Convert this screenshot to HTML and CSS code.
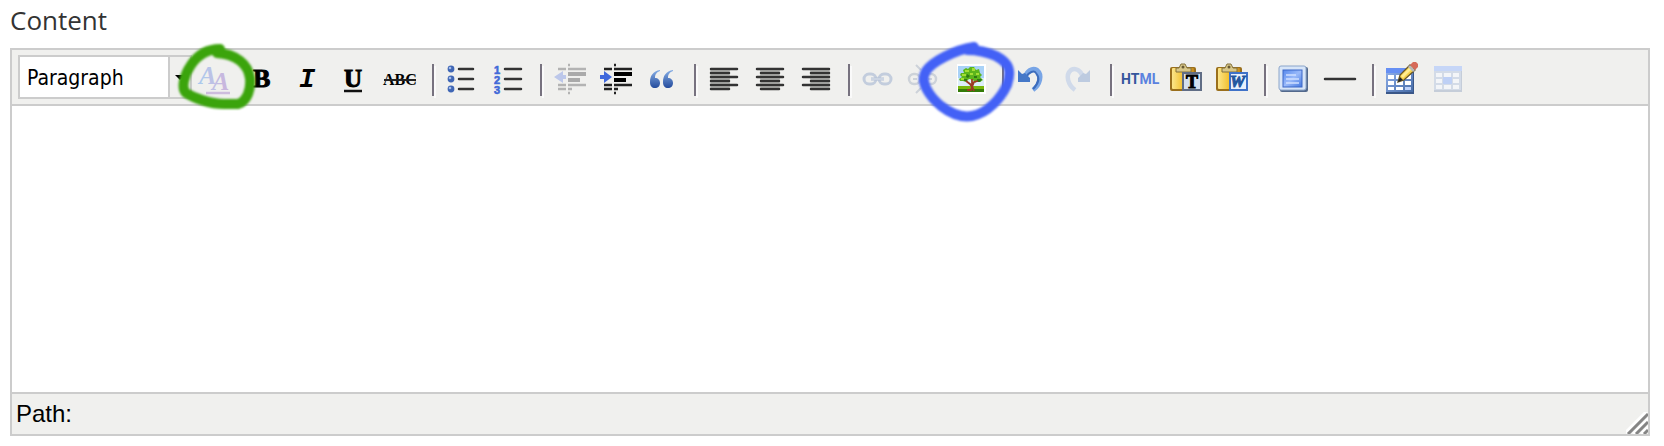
FILE: index.html
```html
<!DOCTYPE html>
<html lang="en">
<head>
    <meta charset="UTF-8">
    <meta name="viewport" content="width=device-width, initial-scale=1.0">
    <title>Content</title>
    <link rel="stylesheet" href="styles.css">
</head>
<body>
    <div class="field">
        <label class="field-label" for="content">Content</label>

        <div class="editor">
            <div class="toolbar" role="toolbar">
                <div class="format">
                    <select class="format-select" aria-label="Format">
                        <option>Paragraph</option>
                    </select>
                    <span class="format-arrow"></span>
                </div>

                <button type="button" class="tool" aria-label="Edit CSS style">
                    <svg viewBox="0 0 46 54">
                        <defs><linearGradient id="letters" x1="7" y1="0" x2="38" y2="0" gradientUnits="userSpaceOnUse"><stop offset="0" stop-color="#a9cbee"/><stop offset=".5" stop-color="#c0bfe4"/><stop offset="1" stop-color="#cdb2da"/></linearGradient></defs>
                        <text x="7" y="34" class="serif italic letters" font-size="26">A<tspan x="20" y="40">A</tspan></text>
                        <path d="M14 43H38" stroke="#cdbcdd" stroke-width="2.5"/>
                    </svg>
                </button>
                <button type="button" class="tool" aria-label="Bold">
                    <svg viewBox="0 0 46 54"><text x="15" y="37" class="serif heavy" font-size="26">B</text></svg>
                </button>
                <button type="button" class="tool" aria-label="Italic">
                    <svg viewBox="0 0 46 54"><text x="15" y="37" class="mono italic" font-size="27">I</text></svg>
                </button>
                <button type="button" class="tool" aria-label="Underline">
                    <svg viewBox="0 0 46 54">
                        <text x="14" y="37" class="serif heavy" font-size="25">U</text>
                        <path d="M14 41H32" stroke="#111" stroke-width="2.5"/>
                    </svg>
                </button>
                <button type="button" class="tool" aria-label="Strikethrough">
                    <svg viewBox="0 0 46 54">
                        <text x="7" y="35" class="serif" font-size="16">ABC</text>
                        <path d="M8 30H40" stroke="#222" stroke-width="2"/>
                    </svg>
                </button>
                <span class="separator"></span>

                <button type="button" class="tool" aria-label="Bulleted list">
                    <svg viewBox="0 0 46 54">
                        <g fill="#3f66b5"><circle cx="13" cy="19" r="3.4"/><circle cx="13" cy="29" r="3.4"/><circle cx="13" cy="39" r="3.4"/></g>
                        <g fill="#a5bdea"><circle cx="12" cy="18" r="1.3"/><circle cx="12" cy="28" r="1.3"/><circle cx="12" cy="38" r="1.3"/></g>
                        <path d="M21 19H35M21 29H35M21 39H35" class="line"/>
                    </svg>
                </button>
                <button type="button" class="tool" aria-label="Numbered list">
                    <svg viewBox="0 0 46 54">
                        <g class="numbers"><text x="10" y="24">1</text><text x="10" y="34">2</text><text x="10" y="44">3</text></g>
                        <path d="M21 19H37M21 29H37M21 39H37" class="line"/>
                    </svg>
                </button>
                <span class="separator"></span>

                <button type="button" class="tool" aria-label="Outdent" disabled>
                    <svg viewBox="0 0 46 54">
                        <path d="M12 19H20M22 19H40M12 35H20M22 35H40M12 39H20M22 39H26M22 15H24M22 43H24" stroke="#b3b3b3" stroke-width="2.4"/>
                        <path d="M22 24H40M22 30H34" stroke="#aaa" stroke-width="4"/>
                        <path d="M8 27L17 21V25H20V29H17V33Z" fill="#bcc7ea"/>
                    </svg>
                </button>
                <button type="button" class="tool" aria-label="Indent">
                    <svg viewBox="0 0 46 54">
                        <path d="M12 19H20M22 19H40M12 35H20M22 35H40M12 39H20M22 39H26M22 15H24M22 43H24" stroke="#222" stroke-width="2.4"/>
                        <path d="M22 24H40M22 30H34" stroke="#000" stroke-width="4"/>
                        <path d="M20 27L12 21V25H8V29H12V33Z" fill="#3f68dc"/>
                    </svg>
                </button>
                <button type="button" class="tool" aria-label="Blockquote">
                    <svg viewBox="0 0 46 54">
                        <defs><linearGradient id="quote" x1="0" y1="0" x2="0" y2="1"><stop offset="0" stop-color="#86aee6"/><stop offset="1" stop-color="#244b9c"/></linearGradient></defs>
                        <path d="M22 20C15 21 12 26 12 32C12 36 14 38 17 38C20 38 22 36 22 33C22 30 20 28 17 28C17 24 19 22 22 21Z" fill="url(#quote)"/>
                        <path d="M35 20C28 21 25 26 25 32C25 36 27 38 30 38C33 38 35 36 35 33C35 30 33 28 30 28C30 24 32 22 35 21Z" fill="url(#quote)"/>
                    </svg>
                </button>
                <span class="separator"></span>

                <button type="button" class="tool" aria-label="Align left">
                    <svg viewBox="0 0 46 54">
                        <path d="M10 19H30V39H10Z" fill="#c3c4c2"/>
                        <path d="M11 19H37M11 23H29M11 27H37M11 31H29M11 35H37M11 39H29" class="line"/>
                    </svg>
                </button>
                <button type="button" class="tool" aria-label="Align center">
                    <svg viewBox="0 0 46 54">
                        <path d="M14 19H34V39H14Z" fill="#c3c4c2"/>
                        <path d="M11 19H37M15 23H33M11 27H37M15 31H33M11 35H37M15 39H33" class="line"/>
                    </svg>
                </button>
                <button type="button" class="tool" aria-label="Align right">
                    <svg viewBox="0 0 46 54">
                        <path d="M18 19H38V39H18Z" fill="#c3c4c2"/>
                        <path d="M11 19H37M19 23H37M11 27H37M19 31H37M11 35H37M19 39H37" class="line"/>
                    </svg>
                </button>
                <span class="separator"></span>

                <button type="button" class="tool" aria-label="Insert link" disabled>
                    <svg viewBox="0 0 46 54" fill="none" stroke="#c3cddd" stroke-width="3">
                        <rect x="10" y="24" width="12" height="10" rx="5"/><rect x="25" y="24" width="12" height="10" rx="5"/>
                        <path d="M17 29H30" stroke="#b4c1d6"/><path d="M17 29H30" stroke="#e3e8ef" stroke-width="1"/>
                    </svg>
                </button>
                <button type="button" class="tool" aria-label="Unlink" disabled>
                    <svg viewBox="0 0 46 54" fill="none" stroke="#cdd2d9" stroke-width="2.5">
                        <rect x="9" y="24" width="11" height="10" rx="5"/><rect x="25" y="24" width="11" height="10" rx="5"/>
                        <path d="M13 29H17M28 29H32M16 15L21 20M29 15L24 20M16 43L21 38M29 43L24 38" stroke-width="2"/>
                    </svg>
                </button>
                <button type="button" class="tool" aria-label="Insert image">
                    <svg viewBox="0 0 46 54">
                        <path d="M11 14H40V44H11Z" fill="#fff"/>
                        <path d="M12 16H38V37H12Z" fill="#a9d2f7"/>
                        <path d="M12 28H38V37H12Z" fill="#dceefa"/>
                        <path d="M12 36H38V39H12Z" fill="#79b80e"/><path d="M12 39H38V42H12Z" fill="#347b08"/>
                        <path d="M17 20L20 18L22 19L24 17H28L30 20L33 19L34 23L36 25L34 27L37 30L34 32L31 31L29 33L27 30L23 29L20 32L17 31H14L13 29L16 27L14 25L15 23L18 23Z" fill="#5cb51c"/>
                        <path d="M19 20H23V22H19ZM26 18H29V21H26ZM16 24H20V26H16ZM24 23H27V25H24ZM30 23H33V25H30ZM15 28H18V30H15Z" fill="#a3df35"/>
                        <path d="M21 24L24 26L22 28L20 27ZM28 26H31V28H28ZM31 29H36L34 32H31ZM18 29H21V31H18Z" fill="#2e7a14"/>
                        <path d="M20 31L24 34L26 37L25 40H22V41M26 37L28 32L32 31M26 36V29M26 36L28 41" fill="none" stroke="#9c3a22" stroke-width="1.8"/>
                    </svg>
                </button>
                <span class="separator"></span>

                <button type="button" class="tool" aria-label="Undo">
                    <svg viewBox="0 0 46 54">
                        <path d="M17 27C19 21 24 17 29 20C35 25 32 35 25 40" fill="none" stroke="#78a5e6" stroke-width="4.5"/>
                        <path d="M18 27C21 22 26 20 28 23C32 28 30 34 25 39" fill="none" stroke="#3d6dbd" stroke-width="2"/>
                        <path d="M10 20L14 24L17 23L22 28V32H10Z" fill="#4578c8"/>
                    </svg>
                </button>
                <button type="button" class="tool" aria-label="Redo" disabled>
                    <svg viewBox="0 0 46 54">
                        <path d="M29 27C27 21 22 17 17 20C11 25 14 35 21 40" fill="none" stroke="#d0daea" stroke-width="4.5"/>
                        <path d="M36 20L32 24L29 23L24 28V32H36Z" fill="#bdcbe0"/>
                    </svg>
                </button>
                <span class="separator"></span>

                <button type="button" class="tool" aria-label="Edit HTML source">
                    <svg viewBox="0 0 46 54"><text x="5" y="34" class="source">HT<tspan fill="#5b82df">ML</tspan></text></svg>
                </button>
                <button type="button" class="tool" aria-label="Paste as plain text">
                    <svg viewBox="0 0 46 54">
                        <defs>
                            <linearGradient id="board"><stop offset="0" stop-color="#fbe58a"/><stop offset=".5" stop-color="#f3c02f"/><stop offset="1" stop-color="#c58a1c"/></linearGradient>
                        </defs>
                        <rect x="8" y="17" width="26" height="24" rx="2" fill="#9a6f1c"/>
                        <rect x="10" y="18" width="22" height="21" rx="1" fill="url(#board)"/>
                        <path d="M14 22V18H17L19 14H23L25 18H29V22Z" fill="#d8c789" stroke="#83713b"/>
                        <circle cx="21" cy="17" r="1.5" fill="#685a34"/>
                        <path d="M20 22H40V41H20Z" fill="#606d85"/><path d="M22 24H38V39H22Z" fill="#d4dfef"/>
                        <text x="24" y="38" class="serif heavy" font-size="18">T</text>
                    </svg>
                </button>
                <button type="button" class="tool" aria-label="Paste from Word">
                    <svg viewBox="0 0 46 54">
                        <rect x="8" y="17" width="26" height="24" rx="2" fill="#9a6f1c"/>
                        <rect x="10" y="18" width="22" height="21" rx="1" fill="url(#board)"/>
                        <path d="M14 22V18H17L19 14H23L25 18H29V22Z" fill="#d8c789" stroke="#83713b"/>
                        <circle cx="21" cy="17" r="1.5" fill="#685a34"/>
                        <path d="M21 22H40V41H21Z" fill="#3f72c8"/><path d="M23 24H38V39H23Z" fill="#e8f0fc"/>
                        <text x="22" y="37" class="serif italic" font-size="17" fill="#24579f" stroke="#24579f">W</text>
                    </svg>
                </button>
                <span class="separator"></span>

                <button type="button" class="tool" aria-label="Toggle fullscreen">
                    <svg viewBox="0 0 46 54">
                        <defs><linearGradient id="screen" x1="0" y1="0" x2="1" y2="1"><stop offset="0" stop-color="#5688ec"/><stop offset=".5" stop-color="#9abafa"/><stop offset="1" stop-color="#4477df"/></linearGradient></defs>
                        <rect x="10" y="17" width="28" height="25" rx="2" fill="#53698c"/>
                        <rect x="9" y="16" width="27" height="24" rx="2" fill="#d7e5f8" stroke="#8ca6ca"/>
                        <rect x="13" y="20" width="19" height="17" fill="url(#screen)" stroke="#3d68c7"/>
                        <path d="M16 25H26M16 29H29M16 33H29" stroke="#d0e0ff" stroke-width="1.5"/>
                    </svg>
                </button>
                <button type="button" class="tool" aria-label="Horizontal rule">
                    <svg viewBox="0 0 46 54"><path d="M9 29H39" class="line"/></svg>
                </button>
                <span class="separator"></span>

                <button type="button" class="tool" aria-label="Insert table">
                    <svg viewBox="0 0 46 54">
                        <defs><linearGradient id="grid" x1="0" y1="0" x2="1" y2="1"><stop offset="0" stop-color="#95b4ef"/><stop offset="1" stop-color="#456ba6"/></linearGradient></defs>
                        <path d="M8 18H36V44H8Z" fill="#3a5788"/><path d="M8 18H35V42H8Z" fill="url(#grid)"/>
                        <path d="M8 18H35V23H8Z" fill="#668ff3"/>
                        <path d="M10 25H16V29H10ZM18 25H25V29H18ZM27 25H33V29H27ZM10 31H16V35H10ZM18 31H25V35H18ZM27 31H33V35H27ZM10 37H16V40H10ZM18 37H25V40H18Z" fill="#fff"/>
                        <path d="M27 37H33V40H27Z" fill="#bed2fb"/>
                        <path d="M20 32L22 25L32 15L37 20L26 30Z" fill="#f4d14b" stroke="#665528" stroke-width="1.3"/>
                        <path d="M23 26L33 16L35 18L25 28Z" fill="#ffed91"/>
                        <path d="M30 17L32 15L37 20L35 22Z" fill="#b9b9b7"/>
                        <path d="M32 15L35 12H38L40 14V17L37 20Z" fill="#d66a59"/>
                        <path d="M20 32L22 27L25 30Z" fill="#222"/>
                    </svg>
                </button>
                <button type="button" class="tool" aria-label="Table cell properties" disabled>
                    <svg viewBox="0 0 46 54">
                        <path d="M10 16H38V42H10Z" fill="#c5cdd9"/><path d="M10 16H37V40H10Z" fill="#d3dbe7"/>
                        <path d="M10 16H38V21H10Z" fill="#c6d6f7"/>
                        <path d="M12 23H18V27H12ZM20 23H27V27H20ZM29 23H35V27H29ZM12 29H18V33H12ZM29 29H35V33H29ZM12 35H18V39H12ZM20 35H27V39H20ZM29 35H35V39H29Z" fill="#f3f5f8"/>
                        <path d="M19 27H28V34H19Z" fill="#bed0f5"/>
                    </svg>
                </button>
            </div>

            <textarea class="editor-area" id="content"></textarea>

            <div class="statusbar">
                <span>Path:</span>
                <svg class="resize-handle" viewBox="0 0 22 22">
                    <path d="M-1 21L22 -2M7 22L23 6M15 22L23 14" stroke="#fff" stroke-width="3"/>
                    <path d="M2 22L22 2M10 22L22 10M18 22L22 18" stroke="#858585" stroke-width="3"/>
                </svg>
            </div>
        </div>

        <!-- Hand-drawn rings around the style and image buttons -->
        <svg class="marks" viewBox="0 0 1100 130">
            <path class="mark-green" d="M220 49C207 49 197 56 191 65C184 75 181 88 186 93C194 98 210 104 224 104H238C248 101 251 88 250 78C248 64 236 54 217 53"/>
            <path class="mark-blue" d="M974 47C954 50 932 62 926 71C919 82 930 97 941 106C950 113 960 118 972 116C988 113 1001 98 1007 85C1012 70 1009 63 996 56C987 52 978 50 967 50"/>
        </svg>
    </div>
</body>
</html>
```

FILE: styles.css
```css
* {
    margin: 0;
    padding: 0;
    box-sizing: border-box;
}

body {
    background: #ffffff;
    color: #000000;
    font-family: "Liberation Sans", Arial, sans-serif;
}

.field {
    position: relative;
    padding: 2px 14px 10px 10px;
}

.field-label {
    display: block;
    margin-bottom: 10px;
    color: #333333;
    font-family: "Open Sans", "Noto Sans", sans-serif;
    font-size: 26px;
    line-height: 36px;
}

.editor {
    border: 2px solid #cccccc;
}

.toolbar {
    display: flex;
    align-items: center;
    height: 56px;
    padding-left: 6px;
    background: #f0f0ee;
    border-bottom: 2px solid #cccccc;
}

.format {
    display: flex;
    width: 174px;
    height: 44px;
    border: 2px solid #cccccc;
}

.format-select {
    flex: 1;
    padding: 2px 0 0 7px;
    appearance: none;
    background: #ffffff;
    border: none;
    border-right: 2px solid #cccccc;
    border-radius: 0;
    color: #000000;
    font-family: "DejaVu Sans Condensed", "Noto Sans", sans-serif;
    font-size: 21px;
}

.format-arrow {
    display: flex;
    align-items: center;
    justify-content: center;
    width: 20px;
}

.format-arrow::before {
    content: '';
    border: 5px solid transparent;
    border-top-color: #000000;
    border-bottom: none;
}

.tool {
    width: 46px;
    height: 54px;
    background: none;
    border: none;
    cursor: pointer;
}

.tool:disabled {
    cursor: default;
}

.tool svg {
    display: block;
    width: 46px;
    height: 54px;
}

.separator {
    width: 2px;
    height: 32px;
    margin: 6px 4px 0 10px;
    background: #77727f;
    box-shadow: 2px 2px 0 #fafafa;
}

.line {
    stroke: #333333;
    stroke-width: 2.5;
    stroke-linecap: round;
}

.serif {
    font-family: "Liberation Serif", serif;
    font-weight: bold;
}

.mono {
    font-family: "Liberation Mono", monospace;
    font-weight: bold;
}

.italic {
    font-style: italic;
}

.heavy {
    stroke: #000000;
    stroke-width: 1;
}

.letters {
    fill: url(#letters);
}

.numbers {
    fill: #4169d8;
    stroke: #4169d8;
    stroke-width: 0.6;
    font-family: "Liberation Sans", sans-serif;
    font-size: 11px;
    font-weight: bold;
}

.source {
    fill: #34569d;
    font-family: Roboto, sans-serif;
    font-size: 14px;
    font-weight: bold;
}

.editor-area {
    display: block;
    width: 100%;
    height: 286px;
    padding: 10px;
    border: none;
    outline: none;
    resize: none;
    font-size: 20px;
}

.statusbar {
    display: flex;
    align-items: center;
    justify-content: space-between;
    height: 42px;
    padding-left: 4px;
    background: #f0f0ee;
    border-top: 2px solid #cccccc;
    font-size: 24px;
}

.resize-handle {
    align-self: flex-end;
    width: 22px;
    height: 22px;
}

.marks {
    position: absolute;
    top: 0;
    left: 0;
    width: 1100px;
    height: 130px;
    fill: none;
    stroke-linecap: round;
    stroke-linejoin: round;
    stroke-width: 10;
    filter: blur(1px);
    pointer-events: none;
}

.mark-green {
    stroke: #3ba40c;
}

.mark-blue {
    stroke: #4361f6;
}
```
